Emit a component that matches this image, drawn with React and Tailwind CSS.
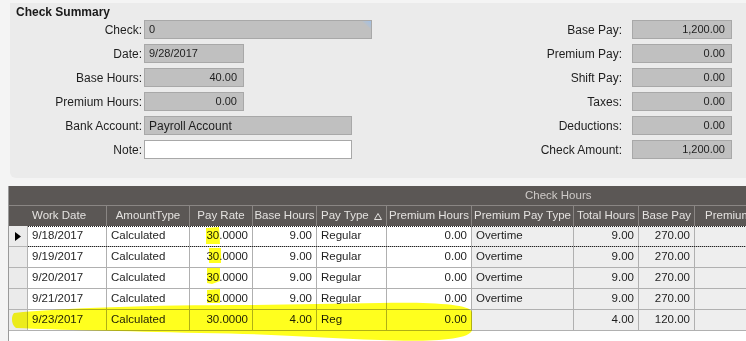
import React from "react";

const font = { fontFamily: '"Liberation Sans", Arial, sans-serif' };

function Field({ label, width, value, align = "left", white = false, corner = false, textSize = "text-[11px]" }) {
  return (
    <div className="flex items-center h-[19px] mb-[5px]">
      <div className="w-[134px] pr-[2px] text-right text-[12px] text-[#1e1e1e] whitespace-nowrap">{label}</div>
      <div
        className={`relative h-[19px] border border-[#a8a8a8] ${white ? "bg-white" : "bg-[#c0c0c0]"} ${textSize} text-[#1e1e1e] flex items-center px-[4px] ${align === "right" ? "justify-end pr-[6px]" : ""}`}
        style={{ width }}
      >
        {value}
        {corner && (
          <svg className="absolute right-0 top-0" width="9" height="8" viewBox="0 0 9 8">
            <defs>
              <linearGradient id="cg" x1="1" y1="0" x2="0" y2="1">
                <stop offset="0" stopColor="#9fc0e8" />
                <stop offset="1" stopColor="#c0c0c0" stopOpacity="0" />
              </linearGradient>
            </defs>
            <polygon points="0,0 9,0 9,8" fill="url(#cg)" />
          </svg>
        )}
      </div>
    </div>
  );
}

function RField({ label, value }) {
  return (
    <div className="flex items-center h-[19px] mb-[5px]">
      <div className="text-right text-[12px] text-[#1e1e1e] whitespace-nowrap mr-[10px]">{label}</div>
      <div className="w-[100px] h-[19px] border border-[#a8a8a8] bg-[#c0c0c0] text-[11px] text-[#1e1e1e] flex items-center justify-end pr-[6px]">
        {value}
      </div>
    </div>
  );
}

const cols = [
  { w: 79, title: "Work Date", align: "left", hAlign: "left", bg: "bg-white" },
  { w: 83, title: "AmountType", align: "left", hAlign: "center", bg: "bg-white" },
  { w: 63, title: "Pay Rate", align: "right", hAlign: "center", bg: "bg-white" },
  { w: 64, title: "Base Hours", align: "right", hAlign: "center", bg: "bg-white" },
  { w: 70, title: "Pay Type", align: "left", hAlign: "left", bg: "bg-white", sort: true },
  { w: 85, title: "Premium Hours", align: "right", hAlign: "center", bg: "bg-white" },
  { w: 102, title: "Premium Pay Type", align: "left", hAlign: "center", bg: "bg-[#eeeeee]" },
  { w: 65, title: "Total Hours", align: "right", hAlign: "center", bg: "bg-[#eeeeee]" },
  { w: 56, title: "Base Pay", align: "right", hAlign: "center", bg: "bg-[#eeeeee]" },
  { w: 100, title: "Premium", align: "right", hAlign: "premium", bg: "bg-[#eeeeee]" },
];

const rows = [
  ["9/18/2017", "Calculated", "30.0000", "9.00", "Regular", "0.00", "Overtime", "9.00", "270.00", ""],
  ["9/19/2017", "Calculated", "30.0000", "9.00", "Regular", "0.00", "Overtime", "9.00", "270.00", ""],
  ["9/20/2017", "Calculated", "30.0000", "9.00", "Regular", "0.00", "Overtime", "9.00", "270.00", ""],
  ["9/21/2017", "Calculated", "30.0000", "9.00", "Regular", "0.00", "Overtime", "9.00", "270.00", ""],
  ["9/23/2017", "Calculated", "30.0000", "4.00", "Reg", "0.00", "", "4.00", "120.00", ""],
];

function hClass(h) {
  if (h === "center") return "justify-center px-[4px]";
  if (h === "premium") return "justify-start pl-[10px]";
  return "justify-start px-[4px]";
}

export default function App() {
  return (
    <div className="relative w-[746px] h-[341px] overflow-hidden bg-[#f4f4f4]" style={font}>
      {/* Check Summary panel */}
      <div className="ml-[10px] mt-[3px] h-[175px] bg-[#ebebeb] rounded-bl-[6px] flex">
        <div className="flex flex-col">
          <div className="h-[17px] pl-[6px] pt-[2px] text-[12px] font-bold text-[#1a1a1a] leading-[14px]">Check Summary</div>
          <Field label="Check:" width={228} value="0" corner />
          <Field label="Date:" width={100} value="9/28/2017" />
          <Field label="Base Hours:" width={100} value="40.00" align="right" />
          <Field label="Premium Hours:" width={100} value="0.00" align="right" />
          <Field label="Bank Account:" width={208} value="Payroll Account" textSize="text-[12px]" />
          <Field label="Note:" width={208} value="" white />
        </div>
        <div className="ml-auto mr-[14px] pt-[17px] flex flex-col items-end">
          <RField label="Base Pay:" value="1,200.00" />
          <RField label="Premium Pay:" value="0.00" />
          <RField label="Shift Pay:" value="0.00" />
          <RField label="Taxes:" value="0.00" />
          <RField label="Deductions:" value="0.00" />
          <RField label="Check Amount:" value="1,200.00" />
        </div>
      </div>

      {/* Check Hours grid */}
      <div className="ml-[8px] mt-[8px] w-[900px] border-l border-[#9a9a9a] bg-white text-[11.5px]">
        <div className="h-[20px] bg-[#5b5755] border-b border-[#8a8684] flex items-center pl-[516px] text-[#cfcbc9]">
          Check Hours
        </div>
        <div className="h-[20px] bg-[#5b5755] flex text-[#e4e2e0]">
          <div className="w-[19px] shrink-0 border-r border-[#5b5755]" />
          {cols.map((c, i) => (
            <div
              key={i}
              className={`shrink-0 h-[20px] border-r border-[#8a8684] flex items-center whitespace-nowrap ${hClass(c.hAlign)}`}
              style={{ width: c.w }}
            >
              {c.title}
              {c.sort && (
                <svg className="ml-[5px]" width="8" height="7" viewBox="0 0 8 7">
                  <polygon points="4,0.5 7.5,6.5 0.5,6.5" fill="none" stroke="#e4e2e0" strokeWidth="1" />
                </svg>
              )}
            </div>
          ))}
        </div>
        {rows.map((r, ri) => (
          <div key={ri} className="flex h-[21px] text-[#1e1e1e]">
            <div className="w-[19px] shrink-0 bg-[#ebebeb] border-r border-b border-[#b4b4b4] flex items-center justify-center">
              {ri === 0 && (
                <svg width="6" height="9" viewBox="0 0 6 9">
                  <polygon points="0,0 6,4.5 0,9" fill="#000" />
                </svg>
              )}
            </div>
            <div className="relative flex">
              {cols.map((c, ci) => (
                <div
                  key={ci}
                  className={`shrink-0 h-[21px] border-r border-b border-[#b0b0b0] ${c.bg} flex items-center px-[4px] whitespace-nowrap ${c.align === "right" ? "justify-end" : "justify-start"}`}
                  style={{ width: c.w }}
                >
                  {r[ci]}
                </div>
              ))}
              {ri === 0 && (
                <div className="absolute inset-0 border-y border-dotted border-[#222] pointer-events-none" />
              )}
            </div>
          </div>
        ))}
        <div className="h-[20px] bg-white" />
      </div>

      {/* Yellow highlighter marks */}
      <svg
        className="absolute left-0 top-0 pointer-events-none mix-blend-multiply"
        width="746"
        height="341"
        viewBox="0 0 746 341"
      >
        <g fill="#ffff1e">
          <path d="M206,228 L219,227 L220,244 L206,244 Z" />
          <path d="M209,248 L221,248 L221,263 L209,263 Z" />
          <path d="M207,268 L220,268 L220,281 L212,284 L207,283 Z" />
          <path d="M207,290 L220,289 L220,303 L207,303 Z" />
          <path d="M14,313 C60,308 150,305 250,305 L380,303 C430,302 470,304 472,312 L472,330 C470,341 420,342 380,340 C320,338 280,334 200,333 C120,331 60,330 16,328 C11,325 11,316 14,313 Z" />
        </g>
      </svg>
    </div>
  );
}
